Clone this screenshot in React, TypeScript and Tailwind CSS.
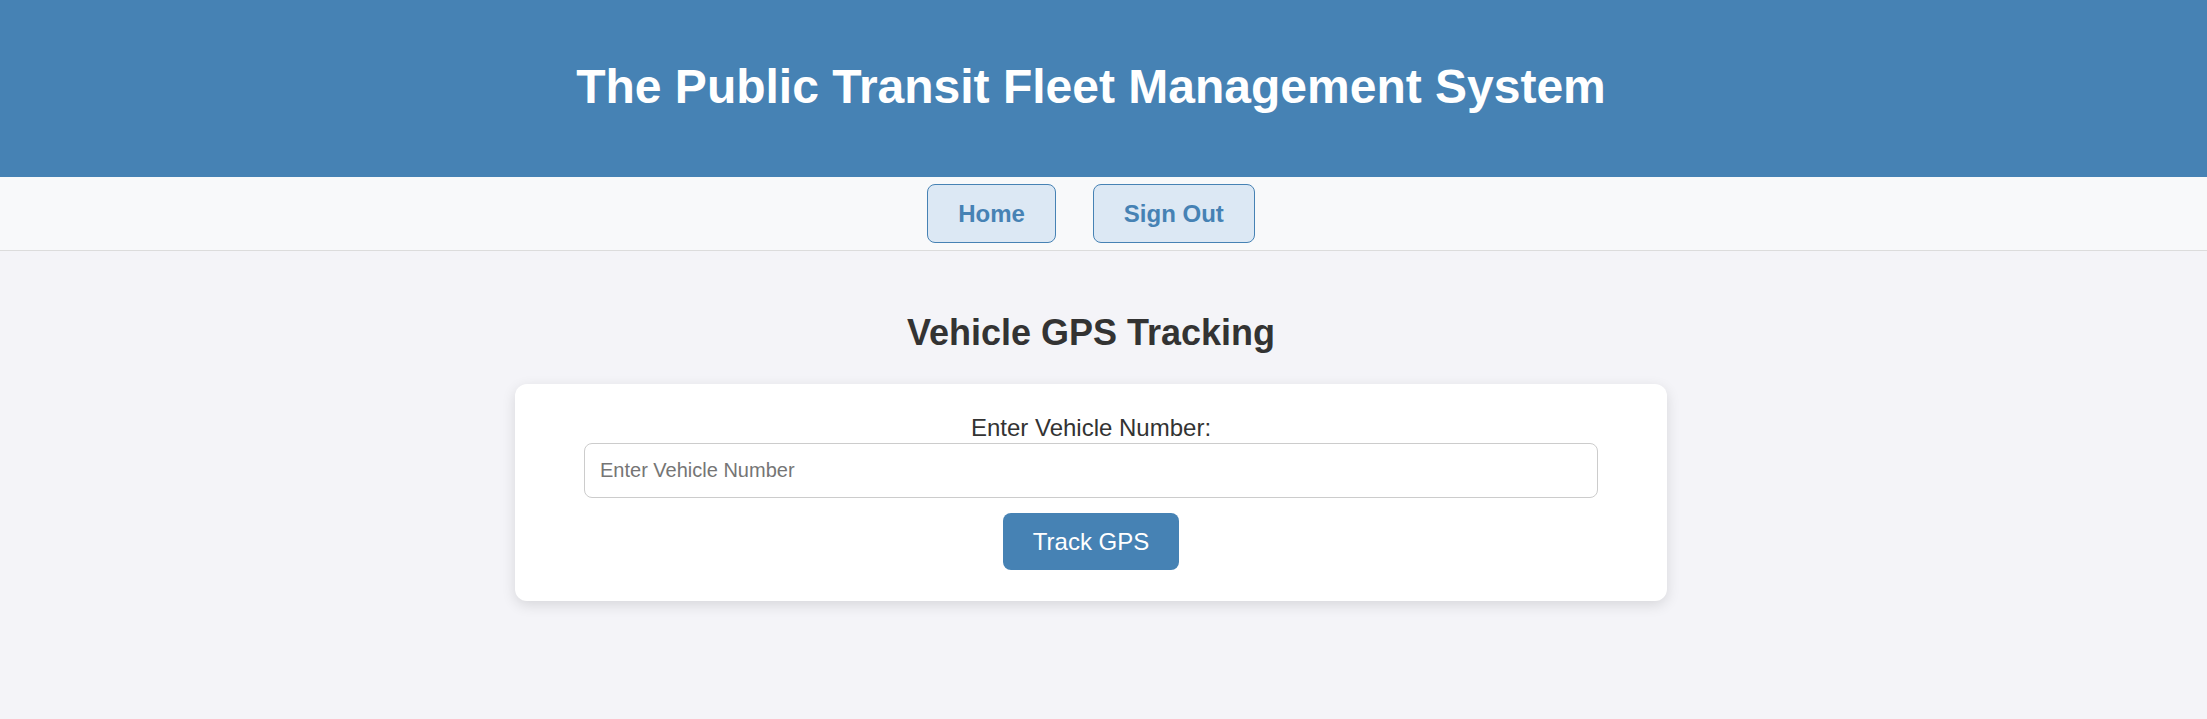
export default function App() {
  return (
    <div className="min-h-screen bg-[#f4f4f8] font-['Liberation_Sans',Arial,sans-serif]">
      {/* Header */}
      <header className="h-[177px] bg-[#4682b4] pr-[25px] pt-[59px]">
        <h1 className="text-center text-[48px] font-bold leading-[55px] text-white">
          The Public Transit Fleet Management System
        </h1>
      </header>

      {/* Nav */}
      <nav className="flex h-[74px] justify-center gap-[37px] border-b border-[#dcdcdc] bg-[#f8f9fa] pr-[25px] pt-[7px]">
        <button className="h-[59px] rounded-[8px] border border-[#4682b4] bg-[#dce8f4] px-[30px] text-[24px] font-bold text-[#4682b4]">
          Home
        </button>
        <button className="h-[59px] rounded-[8px] border border-[#4682b4] bg-[#dce8f4] px-[30px] text-[24px] font-bold text-[#4682b4]">
          Sign Out
        </button>
      </nav>

      {/* Main */}
      <main className="flex flex-col items-center pr-[25px]">
        <h2 className="mt-[61px] text-[36px] font-bold leading-[41px] text-[#333]">
          Vehicle GPS Tracking
        </h2>
        <div className="mt-[31px] flex w-[1152px] flex-col items-center rounded-[12px] bg-white pb-[31px] pt-[30px] shadow-[0_4px_14px_rgba(0,0,0,0.12)]">
          <label className="text-[24px] leading-[28px] text-[#333]">Enter Vehicle Number:</label>
          <input
            type="text"
            placeholder="Enter Vehicle Number"
            className="mt-[1px] h-[55px] w-[1014px] rounded-[8px] border border-[#ccc] bg-white px-[15px] text-[20px] text-[#333] outline-none placeholder:text-[#757575]"
          />
          <button className="mt-[15px] h-[57px] w-[176px] rounded-[8px] bg-[#4682b4] text-[24px] text-white">
            Track GPS
          </button>
        </div>
      </main>
    </div>
  );
}
